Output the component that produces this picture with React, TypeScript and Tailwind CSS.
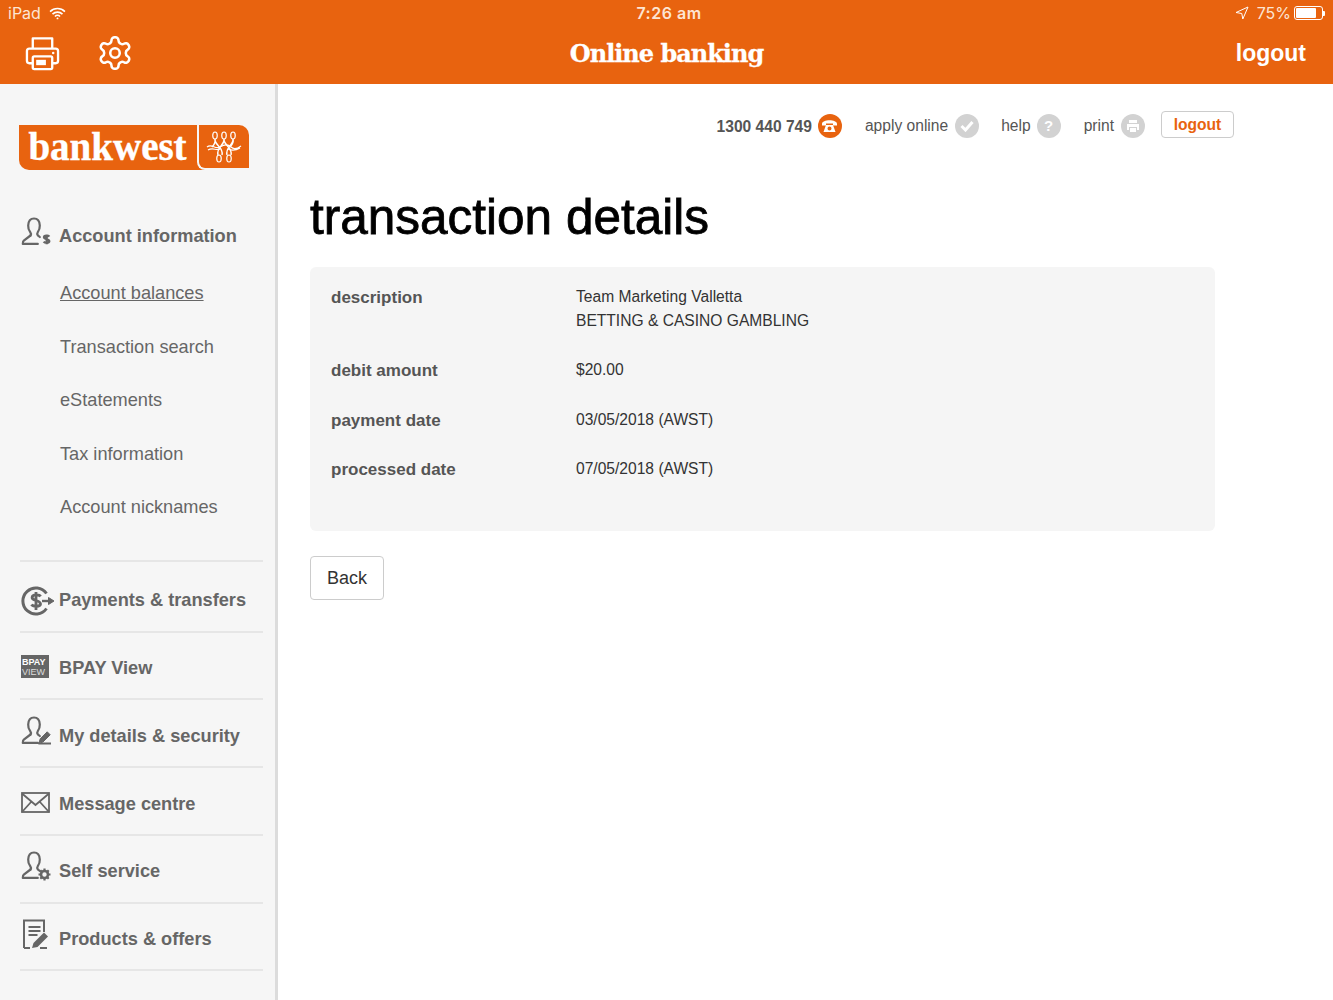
import { ReactNode } from "react";

const ORANGE = "#e8630f";

function PersonBase({ children }: { children?: ReactNode }) {
	return <svg width="30" height="30" viewBox="0 0 30 30" fill="none" stroke="#666" strokeWidth="2.200" strokeLinecap="round" strokeLinejoin="round">
		<path d="M9.500 18.500c.7-1 .6-2.200-.2-3.200C7.900 13.500 7 11.500 7.200 8.500 7.400 4 9.800 1.500 13 1.500s5.600 2.500 5.800 7c.1 2.500-.6 4.800-2 6.700-.7 1-.7 2.200 0 3.200l2 1.600" />
		<path d="M9.500 18.500 2.800 23.600c-.8.600-1 1.900-1 3.300h15" />
		{children}
	</svg>
}

function DollarPerson() {
	return <PersonBase>
		<path d="M28.300 19.700c-.8-1.200-4.900-1.500-5.300.4-.5 2.300 5.600 1.700 5.300 4.200-.3 1.800-4.500 1.800-5.600.3M25.700 17.500v9.800" strokeWidth="2.300" strokeLinecap="butt" />
	</PersonBase>
}

function PenPerson() {
	return <PersonBase>
		<path d="M18 27l1.200-4.200 7-7 3 3-7 7z" fill="#666" strokeWidth="1" />
		<path d="M18 27.500h11.500" />
	</PersonBase>
}

function GearPerson() {
	return <PersonBase>
		<circle cx="23.500" cy="23.500" r="3.500" strokeWidth="2.600" />
		<path d="M23.500 17.500v2M23.500 27.500v2M17.500 23.500h2M27.500 23.500h2M19.300 19.300l1.400 1.400M26.300 26.300l1.400 1.400M19.300 27.700l1.400-1.400M26.300 20.700l1.400-1.400" strokeWidth="2.200" strokeLinecap="butt" />
	</PersonBase>
}

function PaymentsIcon() {
	return <svg width="34" height="30" viewBox="0 0 34 30" fill="none" stroke="#666" strokeLinejoin="round">
		<path d="M25.500 7.500A13 13 0 1 0 25.500 22.500" strokeWidth="3" />
		<path d="M19.500 10.500c-1-2-8-2.400-8.400.8-.4 3.600 8.700 2.800 8.400 6.700-.3 2.900-7.500 2.900-9 .6M15 6v18" strokeWidth="2.800" />
		<path d="M21 15h10" strokeWidth="2.400" />
		<path d="M27.500 11.500 33 15l-5.500 3.500z" fill="#666" strokeWidth="1" />
	</svg>
}

function BpayIcon() {
	return <div className="w-[28px] h-[23px] bg-[#666] flex flex-col justify-center px-px text-white leading-[10px]">
		<span className="text-[9px] font-bold">BPAY</span>
		<span className="text-[9px] text-[#ddd]">VIEW</span>
	</div>
}

function MailIcon() {
	return <svg width="29" height="21" viewBox="0 0 29 21" fill="none" stroke="#666" strokeWidth="1.800">
		<rect x="1" y="1" width="27" height="19" />
		<path d="M1 1.500 14.500 13 28 1.500M1 20l9.500-10.500M28 20l-9.500-10.500" />
	</svg>
}

function OffersIcon() {
	return <svg width="30" height="30" viewBox="0 0 30 30" fill="none" stroke="#666" strokeWidth="2">
		<path d="M3 29V1.500h20V13M3 29h6" />
		<path d="M7.500 8h12M7.500 12h12M7.500 16h9" strokeWidth="2.200" />
		<path d="M11 29l1.500-5L23 13.500l4 4L16.500 28z" fill="#666" stroke="none" />
		<path d="M19 29h7" />
	</svg>
}

function PrinterIcon() {
	return <svg width="35" height="35" viewBox="0 0 36 36" fill="none" stroke="white" strokeWidth="2.400" strokeLinejoin="round">
		<path d="M8 13V2.500h20V13" />
		<path d="M8 28H4.500A2.500 2.500 0 0 1 2 25.500V15.500A2.500 2.500 0 0 1 4.500 13h27A2.500 2.500 0 0 1 34 15.500v10a2.500 2.500 0 0 1-2.500 2.500H28" />
		<rect x="8" y="21" width="20" height="13" rx="1.500" />
		<rect x="11.500" y="24.500" width="10" height="5.500" fill="white" stroke="none" />
		<circle cx="29" cy="17.500" r="1.300" fill="white" stroke="none" />
	</svg>
}

function GearIcon() {
	return <svg width="38" height="38" viewBox="0 0 24 24" fill="none" stroke="white" strokeWidth="1.600" strokeLinecap="round" strokeLinejoin="round">
		<path d="M12.220 2h-.44a2 2 0 0 0-2 2v.18a2 2 0 0 1-1 1.730l-.43.250a2 2 0 0 1-2 0l-.15-.080a2 2 0 0 0-2.730.730l-.22.380a2 2 0 0 0 .730 2.730l.15.100a2 2 0 0 1 1 1.720v.510a2 2 0 0 1-1 1.740l-.15.090a2 2 0 0 0-.730 2.730l.22.380a2 2 0 0 0 2.730.730l.15-.080a2 2 0 0 1 2 0l.43.250a2 2 0 0 1 1 1.730V20a2 2 0 0 0 2 2h.44a2 2 0 0 0 2-2v-.18a2 2 0 0 1 1-1.730l.43-.250a2 2 0 0 1 2 0l.15.080a2 2 0 0 0 2.730-.730l.22-.390a2 2 0 0 0-.730-2.730l-.15-.080a2 2 0 0 1-1-1.740v-.500a2 2 0 0 1 1-1.740l.15-.090a2 2 0 0 0 .730-2.730l-.22-.380a2 2 0 0 0-2.730-.730l-.15.080a2 2 0 0 1-2 0l-.43-.250a2 2 0 0 1-1-1.730V4a2 2 0 0 0-2-2z" />
		<circle cx="12" cy="12" r="3" />
	</svg>
}

function Wifi() {
	return <svg width="17" height="13" viewBox="0 0 16 12" fill="none" stroke="white" strokeWidth="1.500">
		<path d="M1 4.200a10 10 0 0 1 14 0M3.300 6.600a6.800 6.800 0 0 1 9.400 0M5.600 8.800a3.400 3.400 0 0 1 4.800 0" />
		<circle cx="8" cy="10.600" r=".9" fill="white" stroke="none" />
	</svg>
}

function Emblem() {
	return <svg width="36" height="34" viewBox="0 0 36 34" fill="none" stroke="white" strokeWidth="1.200">
		<path d="M9 2C6 2 6 9 9 9s3-7 0-7zM18 2c-3 0-3 7 0 7s3-7 0-7zM27 2c-3 0-3 7 0 7s3-7 0-7z" />
		<path d="M9 9c-1 6 9 8 7 16M18 9c-1 6 9 8 7 16M27 9c1 4-1 6-3 8M18 9c1 6-8 8-6 16M27 9c1 6-8 8-6 16M9 9c1 4-1 6-3 8" strokeWidth="1.500" />
		<path d="M1 17c5-4 8 3 13 0s8-3 11 0 6 2 10-1M2 20c5-3 8 1 12-1M22 19c4 2 7 2 12-1" />
		<path d="M13 25c-3 0-3 7 0 7s3-7 0-7zM23 25c-3 0-3 7 0 7s3-7 0-7z" />
	</svg>
}

function Round({ color, children }: { color: string, children: ReactNode }) {
	return <div className="w-[24px] h-[24px] rounded-full flex items-center justify-center" style={{ backgroundColor: color }}>
		{children}
	</div>
}

function NavRow({ icon, iconClass = "", label, first }: { icon: ReactNode, iconClass?: string, label: string, first?: boolean }) {
	return <div className={`${first ? "h-[71px] pt-[9px]" : "h-[67.750px] pt-[7px]"} ml-[20px] mr-[12px] border-b-2 border-[#e6e6e6] flex items-center`}>
		<div className={`w-[39px] shrink-0 pl-[1px] flex items-center ${iconClass}`}>{icon}</div>
		<span className="text-[18.200px] font-bold text-[#666]">{label}</span>
	</div>
}

function Detail({ label, children, h }: { label: string, children: ReactNode, h: string }) {
	return <div className={`grid grid-cols-[245px_1fr] ${h}`}>
		<div className="pt-[1px] text-[17px] leading-[24px] font-bold text-[#555]">{label}</div>
		<div className="text-[15.600px] leading-[24px] text-[#333]">{children}</div>
	</div>
}

const subLinks = ["Transaction search", "eStatements", "Tax information", "Account nicknames"];

export default function App() {
	return <div className="w-[1333px] h-[1000px] overflow-hidden bg-white flex flex-col font-['Liberation_Sans',Arial,sans-serif]">
		<header className="h-[84px] shrink-0 px-[8px] flex flex-col text-white" style={{ backgroundColor: ORANGE }}>
			<div className="h-[26px] grid grid-cols-3 items-center text-[16px] font-['Inter',sans-serif] text-[#fde5d3]">
				<div className="flex items-center gap-[8px]"><span>iPad</span><Wifi /></div>
				<div className="text-center font-semibold tracking-[0.5px] pl-[5px]">7:26 am</div>
				<div className="flex items-center justify-end gap-[8px]">
					<svg width="14" height="14" viewBox="0 0 14 14" fill="none" stroke="white" strokeWidth="1"><path d="M13 1 1 6.500l5.800 1 1 5.500z" /></svg>
					<span className="-mr-[7px]">75%</span>
					<div className="flex items-center ml-[2px]">
						<div className="w-[29px] h-[14px] border border-white rounded-[3px] p-[1px]"><div className="w-[20px] h-full bg-white rounded-[1px]" /></div>
						<div className="w-[2px] h-[5px] bg-white rounded-r-[1px]" />
					</div>
				</div>
			</div>
			<div className="flex-1 grid grid-cols-3 items-center pb-[3px]">
				<div className="flex items-center gap-[36px] pl-[17px] -mt-[1px]"><PrinterIcon /><GearIcon /></div>
				<div className="text-center text-[24px] font-bold font-['DejaVu_Serif',serif] tracking-[-1px] whitespace-nowrap [-webkit-text-stroke:0.3px_white] pt-[1px]">Online banking</div>
				<div className="text-right pr-[19px] text-[23px] font-bold">logout</div>
			</div>
		</header>

		<div className="flex-1 flex min-h-0">
			<aside className="w-[278px] shrink-0 bg-[#f6f6f6] border-r-[3px] border-[#dcdcdc]">
				<div className="mt-[41px] ml-[19px] w-[230px] h-[45px] flex rounded-tr-[10px] rounded-bl-[10px] overflow-hidden text-white" style={{ backgroundColor: ORANGE }}>
					<div className="w-[178px] flex items-center justify-center font-['Liberation_Serif',serif] font-bold text-[39px] leading-none pb-[3px] pr-[1px] [-webkit-text-stroke:0.4px_white]">bankwest</div>
					<div className="flex-1 border-l-2 border-b-2 border-[#f6f6f6] rounded-bl-[8px] flex items-center justify-center">
						<Emblem />
					</div>
				</div>

				<div className="mt-[50px] mx-[20px] h-[34px] flex items-center">
					<div className="w-[39px] shrink-0 pl-[1px] mb-[10px]"><DollarPerson /></div>
					<span className="text-[18.200px] font-bold text-[#666]">Account information</span>
				</div>

				<div className="mt-[13px] pl-[60px] flex flex-col text-[18.200px] text-[#666]">
					<a className="h-[53.500px] flex items-center underline">Account balances</a>
					{subLinks.map(link => <a key={link} className="h-[53.500px] flex items-center">{link}</a>)}
				</div>

				<div className="mt-[25px] ml-[20px] mr-[12px] border-t-2 border-[#e6e6e6]" />
				<NavRow first icon={<PaymentsIcon />} label="Payments & transfers" />
				<NavRow icon={<BpayIcon />} iconClass="mb-[4px]" label="BPAY View" />
				<NavRow icon={<PenPerson />} iconClass="mb-[12px]" label="My details & security" />
				<NavRow icon={<MailIcon />} iconClass="mb-[4px]" label="Message centre" />
				<NavRow icon={<GearPerson />} iconClass="mb-[12px]" label="Self service" />
				<NavRow icon={<OffersIcon />} iconClass="mb-[12px]" label="Products & offers" />
			</aside>

			<main className="flex-1 pl-[32px]">
				<div className="mt-[27px] w-[924px] h-[30px] flex items-center justify-end text-[15.600px] text-[#555]">
					<span className="font-bold mr-[6px] pt-[2px]">1300 440 749</span>
					<Round color={ORANGE}>
						<svg width="17" height="14" viewBox="0 0 17 14" fill="white"><path d="M1 5c0-5 15-5 15 0v1.500h-4V4.500H5v2H1z" /><path d="M5 6h7l2.500 7h-12zM8.500 7.500a2 2 0 1 0 0 4 2 2 0 0 0 0-4z" fillRule="evenodd" /></svg>
					</Round>
					<span className="ml-[23px] mr-[7px]">apply online</span>
					<Round color="#d2d2d2">
						<svg width="14" height="12" viewBox="0 0 14 12" fill="none" stroke="white" strokeWidth="3"><path d="M1.500 6 5.500 10 12.500 2" /></svg>
					</Round>
					<span className="ml-[22px] mr-[6px]">help</span>
					<Round color="#d2d2d2"><span className="text-white text-[15px] font-bold">?</span></Round>
					<span className="ml-[23px] mr-[7px]">print</span>
					<Round color="#d2d2d2">
						<svg width="14" height="14" viewBox="0 0 14 14" fill="white"><path d="M3 1h8v3H3zM1 5h12v6h-2V8H3v3H1zM4 9h6v4H4z" /></svg>
					</Round>
					<div className="ml-[16px] w-[73px] h-[27px] mb-[3px] border border-[#ccc] rounded-[4px] flex items-center justify-center text-[#e8630f] font-bold">logout</div>
				</div>

				<h1 className="mt-[47px] text-[49.500px] leading-[58px] text-black font-normal [-webkit-text-stroke:0.8px_black]">transaction details</h1>

				<section className="mt-[21px] w-[905px] h-[264px] bg-[#f5f5f5] rounded-[6px] pl-[21px] pt-[18px]">
					<Detail label="description" h="h-[73px]">Team Marketing Valletta<br />BETTING &amp; CASINO GAMBLING</Detail>
					<Detail label="debit amount" h="h-[50px]">$20.00</Detail>
					<Detail label="payment date" h="h-[49px]">03/05/2018 (AWST)</Detail>
					<Detail label="processed date" h="h-[49px]">07/05/2018 (AWST)</Detail>
				</section>

				<button className="mt-[25px] w-[74px] h-[44px] bg-white border border-[#ccc] rounded-[4px] text-[18px] text-[#333]">Back</button>
			</main>
		</div>
	</div>
}
